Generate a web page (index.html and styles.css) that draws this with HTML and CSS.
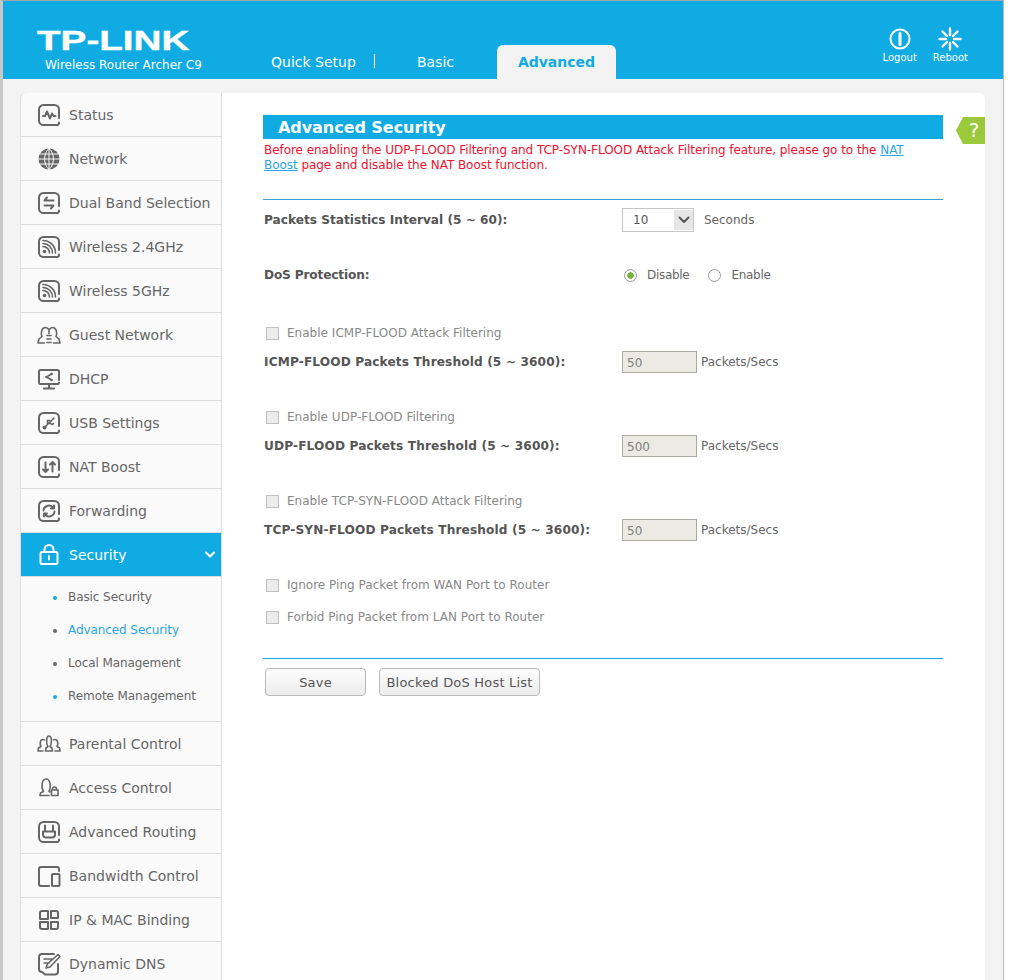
FILE: index.html
```html
<!DOCTYPE html>
<html lang="en">
<head>
  <meta charset="UTF-8">
  <meta name="viewport" content="width=device-width, initial-scale=1.0">
  <title>TP-LINK Wireless Router Archer C9</title>
  <link rel="stylesheet" href="styles.css">
</head>
<body>
  <svg class="sprite" width="0" height="0">
    <symbol id="frame" viewBox="0 0 24 24">
      <path d="M22 15V6.500A4.500 4.500 0 0 0 17.500 2h-11A4.500 4.500 0 0 0 2 6.500v11A4.500 4.500 0 0 0 6.500 22h14a2 2 0 0 0 1.500-2.500"/>
    </symbol>
  </svg>

  <div class="wrap">
    <header class="header">
      <div class="brand">
        <div class="logo">TP-LINK</div>
        <div class="model">Wireless Router Archer C9</div>
      </div>
      <nav class="tabs">
        <a class="tab tab-first">Quick Setup</a>
        <a class="tab tab-basic">Basic</a>
        <a class="tab active">Advanced</a>
      </nav>
      <div class="tools">
        <a class="tool">
          <svg width="24" height="24" viewBox="0 0 24 24"><circle cx="12" cy="12" r="9.500"/><path d="M12 6.500v11" stroke-width="3"/></svg>
          Logout
        </a>
        <a class="tool">
          <svg width="24" height="24" viewBox="0 0 24 24"><path d="M12 1.500v6.500M12 16v6.500M1.500 12H8M16 12h6.500M4.500 4.500l4.500 4.500M15 15l4.500 4.500M19.500 4.500L15 9M9 15l-4.500 4.500" stroke-width="2.400"/></svg>
          Reboot
        </a>
      </div>
    </header>

    <div class="page">
      <aside class="side">
        <a class="item">
          <svg class="icon" viewBox="0 0 24 24"><use href="#frame"/><path d="M6 13h2l2-4.500 3 7 2-5 1.500 2.500h2"/></svg>
          Status
        </a>
        <a class="item">
          <svg class="icon" viewBox="0 0 24 24"><circle class="solid" cx="12" cy="12" r="10.500"/><path class="cut" d="M1.500 12h21M3 7h18M3 17h18M12 1.500v21M12 1.500c-6 5-6 16 0 21M12 1.500c6 5 6 16 0 21"/></svg>
          Network
        </a>
        <a class="item">
          <svg class="icon" viewBox="0 0 24 24"><use href="#frame"/><path d="M16.500 9.500h-9M10 6.500L7.500 9.500M7.500 14.500h9M14 17.500l2.500-3"/></svg>
          Dual Band Selection
        </a>
        <a class="item">
          <svg class="icon" viewBox="0 0 24 24"><use href="#frame"/><circle class="solid" cx="7.500" cy="16.500" r="1.800"/><path class="thin" d="M6 11.500a6.500 6.500 0 0 1 6.500 6.500M6 8.500a9.500 9.500 0 0 1 9.500 9.500M6 5.500a12.500 12.500 0 0 1 12.500 12.500"/></svg>
          Wireless 2.4GHz
        </a>
        <a class="item">
          <svg class="icon" viewBox="0 0 24 24"><use href="#frame"/><circle class="solid" cx="7.500" cy="16.500" r="1.800"/><path class="thin" d="M6 11.500a6.500 6.500 0 0 1 6.500 6.500M6 8.500a9.500 9.500 0 0 1 9.500 9.500M6 5.500a12.500 12.500 0 0 1 12.500 12.500"/></svg>
          Wireless 5GHz
        </a>
        <a class="item">
          <svg class="icon" viewBox="0 0 24 24"><path class="thin" d="M7.500 20H1l1-4 3-2.500C3.500 10 4.500 4.500 8.500 4.500c1.500 0 2.500.7 3.500 2.500 1-1.800 2-2.500 3.500-2.500 4 0 5 5.500 3.500 9l3 2.500 1 4h-6.500"/><path class="thin" d="M10 12.500h4M10 16h4M10 19.500h4M12 8v2.500"/></svg>
          Guest Network
        </a>
        <a class="item">
          <svg class="icon" viewBox="0 0 24 24"><path d="M22 13V4.500A1.500 1.500 0 0 0 20.500 3h-17A1.500 1.500 0 0 0 2 4.500v11A1.500 1.500 0 0 0 3.500 17h17a1.500 1.500 0 0 0 1.500-1.500M12 17v4M7 21.500h10"/><path class="thin" d="M14.500 7l-5 3 5 3"/><circle class="solid" cx="14.500" cy="7" r="1.300"/><circle class="solid" cx="9.500" cy="10" r="1.300"/><circle class="solid" cx="14.500" cy="13" r="1.300"/></svg>
          DHCP
        </a>
        <a class="item">
          <svg class="icon" viewBox="0 0 24 24"><use href="#frame"/><circle class="solid" cx="7.500" cy="16.500" r="2"/><path class="thin" d="M7.500 16.500L17 7M10.500 13.500V9.500h2M12 12l3.500 1.500 1-1"/></svg>
          USB Settings
        </a>
        <a class="item">
          <svg class="icon" viewBox="0 0 24 24"><use href="#frame"/><path d="M8.500 7.500v9.500M6 14.500l2.500 2.500 2.500-2.500M15.500 16.500V7M13 9.500L15.500 7 18 9.500"/></svg>
          NAT Boost
        </a>
        <a class="item">
          <svg class="icon" viewBox="0 0 24 24"><use href="#frame"/><path d="M6.500 11.500a5.500 5.500 0 0 1 10-2.500M17.500 12.500a5.500 5.500 0 0 1-10 2.500M17 6.500V9.500h-3M7 17.500V14.500h3"/></svg>
          Forwarding
        </a>
        <a class="item active">
          <svg class="icon" viewBox="0 0 24 24"><path d="M7.500 9V6.500a4.500 4.500 0 0 1 9 0V9M5 9h14a1.500 1.500 0 0 1 1.500 1.500v9A1.500 1.500 0 0 1 19 21H5a1.500 1.500 0 0 1-1.500-1.500v-9A1.500 1.500 0 0 1 5 9zM12 13v3.500"/></svg>
          Security
          <svg class="chevron" width="10" height="8" viewBox="0 0 10 8"><path d="M1 1.500l4 4 4-4"/></svg>
        </a>
        <ul class="sub">
          <li class="sub-blue">Basic Security</li>
          <li class="current">Advanced Security</li>
          <li>Local Management</li>
          <li class="sub-blue">Remote Management</li>
        </ul>
        <a class="item">
          <svg class="icon" viewBox="0 0 24 24"><path class="thin" d="M8.500 19l.5-3 2-1.500C9 12 9 4 12 4s3 8 1 10.500l2 1.500.5 3zM6 19H1l.5-3 2.500-1.500C2.500 12 3 7.500 6 7.500c.6 0 1 .1 1.500.4M18 19h5l-.5-3-2.500-1.500c1.500-2.500 1-7-2-7-.6 0-1 .1-1.500.4"/></svg>
          Parental Control
        </a>
        <a class="item">
          <svg class="icon" viewBox="0 0 24 24"><path class="thin" d="M3 19.500h9M3 19.500l.5-2.500 3-1.500C4.500 13 4 3 9 3s5 9.500 3 12.500l1 .5M15.500 14v-1a2 2 0 0 1 4 0v1M14.500 14H21v5.500h-6.500z"/></svg>
          Access Control
        </a>
        <a class="item">
          <svg class="icon" viewBox="0 0 24 24"><use href="#frame"/><path d="M8 5.500V11M16 5.500V11M6 11.500h12v3a3 3 0 0 1-3 3H9a3 3 0 0 1-3-3z"/></svg>
          Advanced Routing
        </a>
        <a class="item">
          <svg class="icon" viewBox="0 0 24 24"><path d="M22 7V5a2 2 0 0 0-2-2H4a2 2 0 0 0-2 2v15a2 2 0 0 0 2 2h8M16 10h5.500a1 1 0 0 1 1 1v10a1 1 0 0 1-1 1H16a1 1 0 0 1-1-1V11a1 1 0 0 1 1-1z"/></svg>
          Bandwidth Control
        </a>
        <a class="item">
          <svg class="icon" viewBox="0 0 24 24"><path d="M11 3H5a2 2 0 0 0-2 2v6h8zM14 3h5a2 2 0 0 1 2 2v5h-7zM3 14v5a2 2 0 0 0 2 2h6v-7zM14 14h7v5a2 2 0 0 1-2 2h-5z"/></svg>
          IP &amp; MAC Binding
        </a>
        <a class="item">
          <svg class="icon" viewBox="0 0 24 24"><path d="M17 2H5a3 3 0 0 0-3 3v12a3 3 0 0 0 3 3l3 2.500h10a3 3 0 0 0 3-3V12"/><path class="thin" d="M7 7h8M7 11h5M9 16l1.500-4L21 2.500l2 2L13 15z"/></svg>
          Dynamic DNS
        </a>
      </aside>

      <main class="content">
        <span class="help">?</span>
        <h2 class="title">Advanced Security</h2>
        <p class="warn">Before enabling the UDP-FLOOD Filtering and TCP-SYN-FLOOD Attack Filtering feature, please go to the <a href="#">NAT Boost</a> page and disable the NAT Boost function.</p>
        <div class="rule"></div>

        <form class="form">
          <div class="row row-first">
            <label class="label">Packets Statistics Interval (5 ~ 60):</label>
            <span class="select">10<i class="select-arrow"><svg width="12" height="8" viewBox="0 0 12 8"><path d="M1.500 1.500L6 6l4.500-4.500"/></svg></i></span>
            <span class="unit unit-select">Seconds</span>
          </div>
          <div class="row row-dos">
            <label class="label label-short">DoS Protection:</label>
            <span class="radio on"></span><span class="radio-text">Disable</span>
            <span class="radio"></span><span class="radio-text">Enable</span>
          </div>

          <div class="row row-check"><span class="check"></span>Enable ICMP-FLOOD Attack Filtering</div>
          <div class="row row-near">
            <label class="label label-wide">ICMP-FLOOD Packets Threshold (5 ~ 3600):</label>
            <span class="input">50</span><span class="unit">Packets/Secs</span>
          </div>

          <div class="row row-check row-gap"><span class="check"></span>Enable UDP-FLOOD Filtering</div>
          <div class="row row-near">
            <label class="label label-wide">UDP-FLOOD Packets Threshold (5 ~ 3600):</label>
            <span class="input">500</span><span class="unit">Packets/Secs</span>
          </div>

          <div class="row row-check row-gap"><span class="check"></span>Enable TCP-SYN-FLOOD Attack Filtering</div>
          <div class="row row-near">
            <label class="label label-wide">TCP-SYN-FLOOD Packets Threshold (5 ~ 3600):</label>
            <span class="input">50</span><span class="unit">Packets/Secs</span>
          </div>

          <div class="row row-check row-gap"><span class="check"></span>Ignore Ping Packet from WAN Port to Router</div>
          <div class="row row-check row-ping"><span class="check"></span>Forbid Ping Packet from LAN Port to Router</div>

          <div class="rule rule-end"></div>
          <div class="buttons">
            <button type="button" class="btn btn-save">Save</button>
            <button type="button" class="btn">Blocked DoS Host List</button>
          </div>
        </form>
      </main>
    </div>
  </div>
</body>
</html>
```
FILE: styles.css
```css
html, body {
  height: 980px;
  overflow: hidden;
}
body {
  margin: 0;
  font-family: "DejaVu Sans", sans-serif;
  background-color: #ffffff;
  color: #666666;
}
.sprite {
  position: absolute;
}
svg {
  fill: none;
  stroke: currentColor;
  stroke-width: 2;
  stroke-linecap: round;
  stroke-linejoin: round;
}

.wrap {
  box-sizing: border-box;
  width: 1004px;
  height: 980px;
  border-top: 1px solid #a8a8a8;
  border-left: 3px solid #c8c8c8;
  border-right: 1px solid #b8b8b8;
  background-color: #f3f3f3;
  overflow: hidden;
}

/* header */
.header {
  display: flex;
  height: 78px;
  background-color: #10abe2;
  color: #ffffff;
}
.brand {
  width: 248px;
  flex-shrink: 0;
  padding: 25px 0 0 34px;
  box-sizing: border-box;
}
.logo {
  font-family: "Liberation Sans", sans-serif;
  font-weight: bold;
  font-size: 28px;
  line-height: 30px;
  -webkit-text-stroke: 0.4px #ffffff;
  transform: scaleX(1.38);
  transform-origin: left center;
  white-space: nowrap;
}
.model {
  font-size: 12px;
  line-height: 16px;
  margin: 1px 0 0 8px;
  white-space: nowrap;
}
.tabs {
  display: flex;
  align-items: flex-end;
}
.tab {
  box-sizing: border-box;
  font-size: 14px;
  line-height: 34px;
  color: #ffffff;
  white-space: nowrap;
}
.tab-first {
  position: relative;
  width: 124px;
  padding-left: 20px;
}
.tab-first::after {
  content: "";
  position: absolute;
  right: 0;
  top: 9px;
  height: 14px;
  border-right: 1px solid #ffffff;
}
.tab-basic {
  width: 122px;
  padding-left: 42px;
}
.tab.active {
  width: 119px;
  text-align: center;
  background-color: #f3f3f3;
  color: #10abe2;
  font-weight: bold;
  border-radius: 6px 6px 0 0;
}
.tools {
  display: flex;
  margin-left: auto;
  gap: 16px;
  padding: 26px 35px 0 0;
}
.tool {
  display: flex;
  flex-direction: column;
  align-items: center;
  font-size: 10px;
  line-height: 12px;
  color: #ffffff;
}
.tool svg {
  margin-bottom: 1px;
}

/* page body */
.page {
  display: flex;
  margin: 14px 0 0 17px;
  width: 965px;
}
.side {
  width: 200px;
  flex-shrink: 0;
  background-color: #fafafa;
  border-left: 1px solid #dddddd;
  border-right: 1px solid #dddddd;
  border-radius: 6px 0 0 0;
  overflow: hidden;
}
.item {
  display: flex;
  align-items: center;
  height: 43px;
  border-bottom: 1px solid #dddddd;
  font-size: 14px;
  color: #666666;
  white-space: nowrap;
}
.icon {
  width: 24px;
  height: 24px;
  margin: 0 8px 0 16px;
  flex-shrink: 0;
}
.solid {
  fill: currentColor;
  stroke: none;
}
.cut {
  stroke: #fafafa;
  stroke-width: 1;
}
.thin {
  stroke-width: 1.600;
}
.item.active {
  background-color: #10abe2;
  color: #ffffff;
}
.chevron {
  margin-left: auto;
  margin-right: 6px;
}
.sub {
  list-style: none;
  margin: 0;
  padding: 4px 0 8px;
  border-bottom: 1px solid #dddddd;
}
.sub li {
  position: relative;
  height: 33px;
  line-height: 33px;
  padding-left: 47px;
  font-size: 12px;
  letter-spacing: -0.080px;
  color: #666666;
}
.sub li::before {
  content: "";
  position: absolute;
  left: 32px;
  top: 15px;
  width: 4px;
  height: 4px;
  border-radius: 50%;
  background-color: #666666;
}
.sub li.sub-blue::before {
  background-color: #10abe2;
}
.sub li.current {
  color: #2ba6e0;
}

/* main panel */
.content {
  position: relative;
  flex: 1;
  background-color: #ffffff;
  border-radius: 0 6px 0 0;
  padding: 22px 42px 0 41px;
}
.help {
  position: absolute;
  right: 0;
  top: 24px;
  width: 22px;
  height: 27px;
  padding-left: 7px;
  background-color: #9bc93c;
  clip-path: polygon(0 50%, 7px 0, 100% 0, 100% 100%, 7px 100%);
  color: #ffffff;
  font-size: 20px;
  line-height: 27px;
  text-align: center;
}
.title {
  margin: 0;
  height: 24px;
  padding-left: 15px;
  background-color: #10abe2;
  color: #ffffff;
  font-size: 16px;
  line-height: 26px;
  font-weight: bold;
  letter-spacing: -0.05px;
}
.warn {
  margin: 4px 0 0 1px;
  padding-right: 25px;
  height: 34px;
  font-size: 12px;
  line-height: 15px;
  color: #f0102e;
  letter-spacing: -0.05px;
}
.warn a {
  color: #2ba6e0;
}
.rule {
  margin-top: 22px;
  border-top: 1px solid #3f9fd0;
}
.rule-end {
  margin-top: 29px;
  border-top-color: #10abe2;
}

/* form */
.form {
  font-size: 12px;
  color: #666666;
}
.row {
  display: flex;
  align-items: center;
  height: 24px;
  padding-left: 1px;
  margin-top: 31px;
  white-space: nowrap;
}
.row-first {
  margin-top: 8px;
}
.row-check {
  margin-top: 34px;
  padding-left: 3px;
  color: #888888;
  letter-spacing: 0.02px;
}
.row-check.row-gap {
  margin-top: 31px;
}
.row-check.row-ping {
  margin-top: 8px;
}
.row.row-near {
  margin-top: 5px;
}
.label {
  width: 358px;
  flex-shrink: 0;
  font-weight: bold;
  font-size: 12.150px;
  color: #555555;
}
.label-wide {
  letter-spacing: 0.130px;
}
.label-short {
  letter-spacing: -0.150px;
}
.select {
  position: relative;
  display: flex;
  align-items: center;
  box-sizing: border-box;
  width: 72px;
  height: 24px;
  padding-left: 10px;
  border: 1px solid #c6c6c6;
  color: #555555;
}
.select-arrow {
  position: absolute;
  right: 0;
  top: 1px;
  display: flex;
  align-items: center;
  justify-content: center;
  width: 19px;
  height: 20px;
  background-color: #e6e6e6;
}
.unit-select {
  margin-left: 10px;
}
.unit {
  color: #666666;
}
.radio {
  box-sizing: border-box;
  width: 13px;
  height: 13px;
  border: 1px solid #999999;
  border-radius: 50%;
  background-color: #ffffff;
  margin-left: 2px;
  margin-right: 10px;
  flex-shrink: 0;
}
.radio.on {
  background: radial-gradient(circle, #7ab33c 0 3px, #ffffff 3.500px);
}
.radio-text {
  margin-right: 17px;
  letter-spacing: -0.300px;
}
.check {
  box-sizing: border-box;
  width: 13px;
  height: 13px;
  margin-right: 8px;
  border: 1px solid #c0c0c0;
  background-color: #ececec;
  flex-shrink: 0;
}
.input {
  box-sizing: border-box;
  width: 75px;
  height: 22px;
  padding-left: 4px;
  margin-right: 4px;
  border: 1px solid #a9a9a0;
  background-color: #ebebe4;
  color: #808080;
  line-height: 22px;
}
.buttons {
  display: flex;
  gap: 13px;
  margin: 9px 0 0 2px;
}
.btn {
  box-sizing: border-box;
  height: 28px;
  width: 161px;
  padding: 0;
  border: 1px solid #b8b8b8;
  border-radius: 4px;
  background: linear-gradient(#fdfdfd, #ececec);
  font-family: "DejaVu Sans", sans-serif;
  font-size: 13px;
  letter-spacing: 0.2px;
  color: #555555;
}
.btn-save {
  width: 101px;
}
```
